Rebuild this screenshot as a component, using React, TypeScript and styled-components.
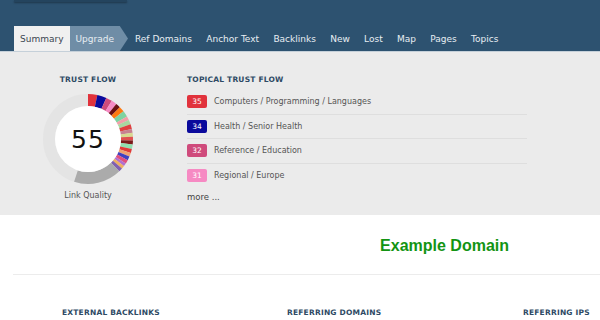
import React from 'react'
import styled, { createGlobalStyle } from 'styled-components'

const GlobalStyle = createGlobalStyle`
  html, body {
    margin: 0;
    padding: 0;
    background: #ffffff;
    font-family: "DejaVu Sans", Verdana, sans-serif;
  }
`

const Header = styled.div`
  height: 51px;
  background-color: #2d5270;
  display: flex;
  flex-direction: column;
  justify-content: space-between;
`

const LogoBar = styled.div`
  width: 113px;
  height: 2px;
  margin-left: 14px;
  background-color: #24445e;
  box-shadow: 0 1px 2px rgba(0, 0, 0, 0.35);
`

const Tabs = styled.div`
  display: flex;
  align-items: stretch;
  height: 25px;
  padding-left: 14px;
`

const Tab = styled.div<{ $variant?: 'active' | 'upgrade' }>`
  display: flex;
  align-items: center;
  font-size: 9px;
  color: ${p => (p.$variant === 'active' ? '#3b4650' : '#e8eef3')};
  padding: 0 6px;
  margin-right: ${p => (p.$variant ? '0' : '2.3px')};
  background-color: ${p =>
    p.$variant === 'active' ? '#f0f0f0' : p.$variant === 'upgrade' ? '#6f8da6' : 'transparent'};
  clip-path: ${p =>
    p.$variant === 'upgrade' ? 'polygon(0 0, 86% 0, 100% 50%, 86% 100%, 0 100%)' : 'none'};
  ${p => (p.$variant === 'upgrade' ? 'padding-right: 14px; margin-right: 1px;' : '')}
`

const Panel = styled.div`
  background-color: #ebebeb;
  border-top: 1px solid #c5d0d9;
  height: 164px;
  display: flex;
  padding-top: 23px;
  box-sizing: border-box;
`

const FlowColumn = styled.div`
  width: 132px;
  margin-left: 22px;
  display: flex;
  flex-direction: column;
  align-items: center;
`

const SectionTitle = styled.div`
  font-size: 7.5px;
  font-weight: bold;
  color: #2e4a64;
  letter-spacing: 0.2px;
  white-space: nowrap;
`

const Gauge = styled.div`
  position: relative;
  width: 92px;
  height: 92px;
  margin-top: 9px;
`

const GaugeValue = styled.div`
  position: absolute;
  inset: 0;
  display: flex;
  align-items: center;
  justify-content: center;
  font-size: 25px;
  color: #111;
  letter-spacing: 1px;
`

const Caption = styled.div`
  font-size: 8px;
  color: #555;
  margin-top: 6px;
`

const TopicalColumn = styled.div`
  margin-left: 33px;
  width: 340px;
`

const TopicList = styled.div`
  margin-top: 6px;
`

const TopicRow = styled.div`
  display: flex;
  align-items: center;
  height: 24.5px;
  border-bottom: 1px solid #dedede;
  box-sizing: border-box;

  &:last-child {
    border-bottom: none;
  }
`

const Badge = styled.div<{ $color: string }>`
  width: 20px;
  height: 13px;
  border-radius: 2px;
  background-color: ${p => p.$color};
  color: #fff;
  font-size: 7.5px;
  display: flex;
  align-items: center;
  justify-content: center;
  margin-right: 7px;
`

const TopicName = styled.div`
  font-size: 8px;
  color: #555;
`

const More = styled.div`
  font-size: 8.5px;
  color: #444;
  margin-top: 4px;
`

const Domain = styled.div`
  height: 60px;
  display: flex;
  align-items: center;
  justify-content: flex-end;
  padding-right: 91px;
  padding-top: 2px;
  box-sizing: border-box;
  font-family: "Liberation Sans", Arial, sans-serif;
  font-weight: bold;
  font-size: 16px;
  color: #139413;
  border-bottom: 1px solid #ececec;
  margin-left: 13px;
`

const Stats = styled.div`
  display: grid;
  grid-template-columns: 62px 225px 236px auto;
  padding-top: 33px;
`

const topics = [
  { value: 35, name: 'Computers / Programming / Languages', color: '#e1323c' },
  { value: 34, name: 'Health / Senior Health', color: '#0b0a9c' },
  { value: 32, name: 'Reference / Education', color: '#cf4b7c' },
  { value: 31, name: 'Regional / Europe', color: '#f68ac3' },
]

const segments: [number, string][] = [
  [12, '#e1323c'], [12, '#0b0a9c'], [8, '#cf4b7c'], [7, '#f68ac3'], [6, '#6b0f12'],
  [7, '#ff7a10'], [8, '#7fd3a0'], [5, '#f2a0a8'], [6, '#a8d8a0'], [6, '#e04040'],
  [5, '#c88090'], [5, '#d8d890'], [5, '#e05050'], [5, '#7b1a1a'], [6, '#90e0b0'],
  [5, '#e03a3a'], [5, '#f0a070'], [5, '#4040c0'], [5, '#e05080'], [4, '#b070d0'],
  [4, '#f0b060'], [5, '#8060b0'],
]

const polar = (r: number, deg: number) => {
  const a = ((deg - 90) * Math.PI) / 180
  return [46 + r * Math.cos(a), 46 + r * Math.sin(a)]
}

const arc = (start: number, end: number, r1: number, r2: number) => {
  const [x1, y1] = polar(r2, start)
  const [x2, y2] = polar(r2, end)
  const [x3, y3] = polar(r1, end)
  const [x4, y4] = polar(r1, start)
  const large = end - start > 180 ? 1 : 0
  return `M${x1} ${y1} A${r2} ${r2} 0 ${large} 1 ${x2} ${y2} L${x3} ${y3} A${r1} ${r1} 0 ${large} 0 ${x4} ${y4} Z`
}

const TrustGauge: React.FC<{ value: number }> = ({ value }) => {
  let angle = 0
  const total = (value / 100) * 360
  const colored = segments.map(([w, c], i) => {
    const start = angle
    angle += w
    return <path key={i} d={arc(start, angle, 33, 45)} fill={c} />
  })
  return (
    <Gauge>
      <svg width="92" height="92" viewBox="0 0 92 92">
        <circle cx="46" cy="46" r="39" fill="none" stroke="#e4e4e4" strokeWidth="12" />
        {colored}
        <path d={arc(angle, total, 33, 45)} fill="#ababab" />
        <circle cx="46" cy="46" r="33" fill="#fff" />
      </svg>
      <GaugeValue>{value}</GaugeValue>
    </Gauge>
  )
}

const tabs = ['Ref Domains', 'Anchor Text', 'Backlinks', 'New', 'Lost', 'Map', 'Pages', 'Topics']

const App: React.FC = () => {
  return (
    <>
      <GlobalStyle />
      <Header>
        <LogoBar />
        <Tabs>
          <Tab $variant="active">Summary</Tab>
          <Tab $variant="upgrade">Upgrade</Tab>
          {tabs.map(t => (
            <Tab key={t}>{t}</Tab>
          ))}
        </Tabs>
      </Header>
      <Panel>
        <FlowColumn>
          <SectionTitle>TRUST FLOW</SectionTitle>
          <TrustGauge value={55} />
          <Caption>Link Quality</Caption>
        </FlowColumn>
        <TopicalColumn>
          <SectionTitle>TOPICAL TRUST FLOW</SectionTitle>
          <TopicList>
            {topics.map(t => (
              <TopicRow key={t.name}>
                <Badge $color={t.color}>{t.value}</Badge>
                <TopicName>{t.name}</TopicName>
              </TopicRow>
            ))}
          </TopicList>
          <More>more ...</More>
        </TopicalColumn>
      </Panel>
      <Domain>Example Domain</Domain>
      <Stats>
        <div />
        <SectionTitle>EXTERNAL BACKLINKS</SectionTitle>
        <SectionTitle>REFERRING DOMAINS</SectionTitle>
        <SectionTitle>REFERRING IPS</SectionTitle>
      </Stats>
    </>
  )
}

export default App
